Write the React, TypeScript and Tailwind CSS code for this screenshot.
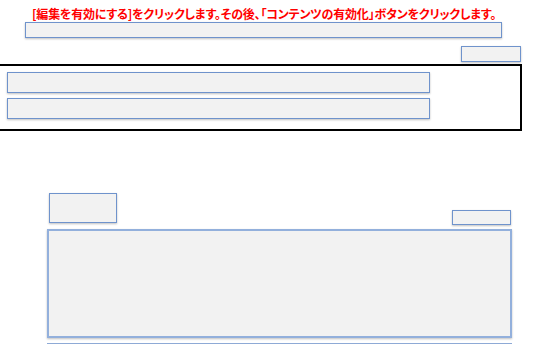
import React from 'react';

const boxCls = 'bg-[#f2f2f2] border border-[#6f93cc] shadow-[0_1px_2px_rgba(0,0,0,0.25)]';

export default function App() {
  return (
    <div className="w-[540px] h-[344px] bg-white overflow-hidden relative font-['Noto_Sans_CJK_JP',sans-serif]">
      {/* instruction */}
      <div className="h-[22px] pl-[32px] pt-[7px] text-[12px] leading-[14px] font-bold text-[#ff0000] whitespace-nowrap tracking-[-0.2px] [font-feature-settings:'palt']">
        [編集を有効にする]をクリックします。その後、「コンテンツの有効化」ボタンをクリックします。
      </div>
      <div className={`ml-[25px] w-[477px] h-[16px] ${boxCls}`} />

      <div className="flex justify-end pr-[19px] pt-[8px]">
        <div className={`w-[60px] h-[16px] ${boxCls}`} />
      </div>

      {/* bordered panel */}
      <div className="mt-[2px] w-[522px] h-[67px] border-2 border-l-0 border-black flex flex-col gap-[5px] pl-[7px] pt-[6px]">
        <div className={`w-[423px] h-[21px] ${boxCls}`} />
        <div className={`w-[423px] h-[21px] ${boxCls}`} />
      </div>

      <div className="mt-[62px] flex items-end pl-[49px] pr-[29px]">
        <div className={`w-[68px] h-[30px] ${boxCls}`} />
        <div className="flex-1" />
        <div className={`w-[59px] h-[15px] mb-[-2px] ${boxCls}`} />
      </div>

      <div className="mt-[6px] ml-[47px] w-[465px] h-[109px] bg-[#f2f2f2] border-2 border-[#93b0dc] shadow-[0_1px_2px_rgba(0,0,0,0.25)]" />
      <div className="mt-[5px] ml-[47px] w-[465px] h-[2px] bg-[#8eaad6]" />
    </div>
  );
}
